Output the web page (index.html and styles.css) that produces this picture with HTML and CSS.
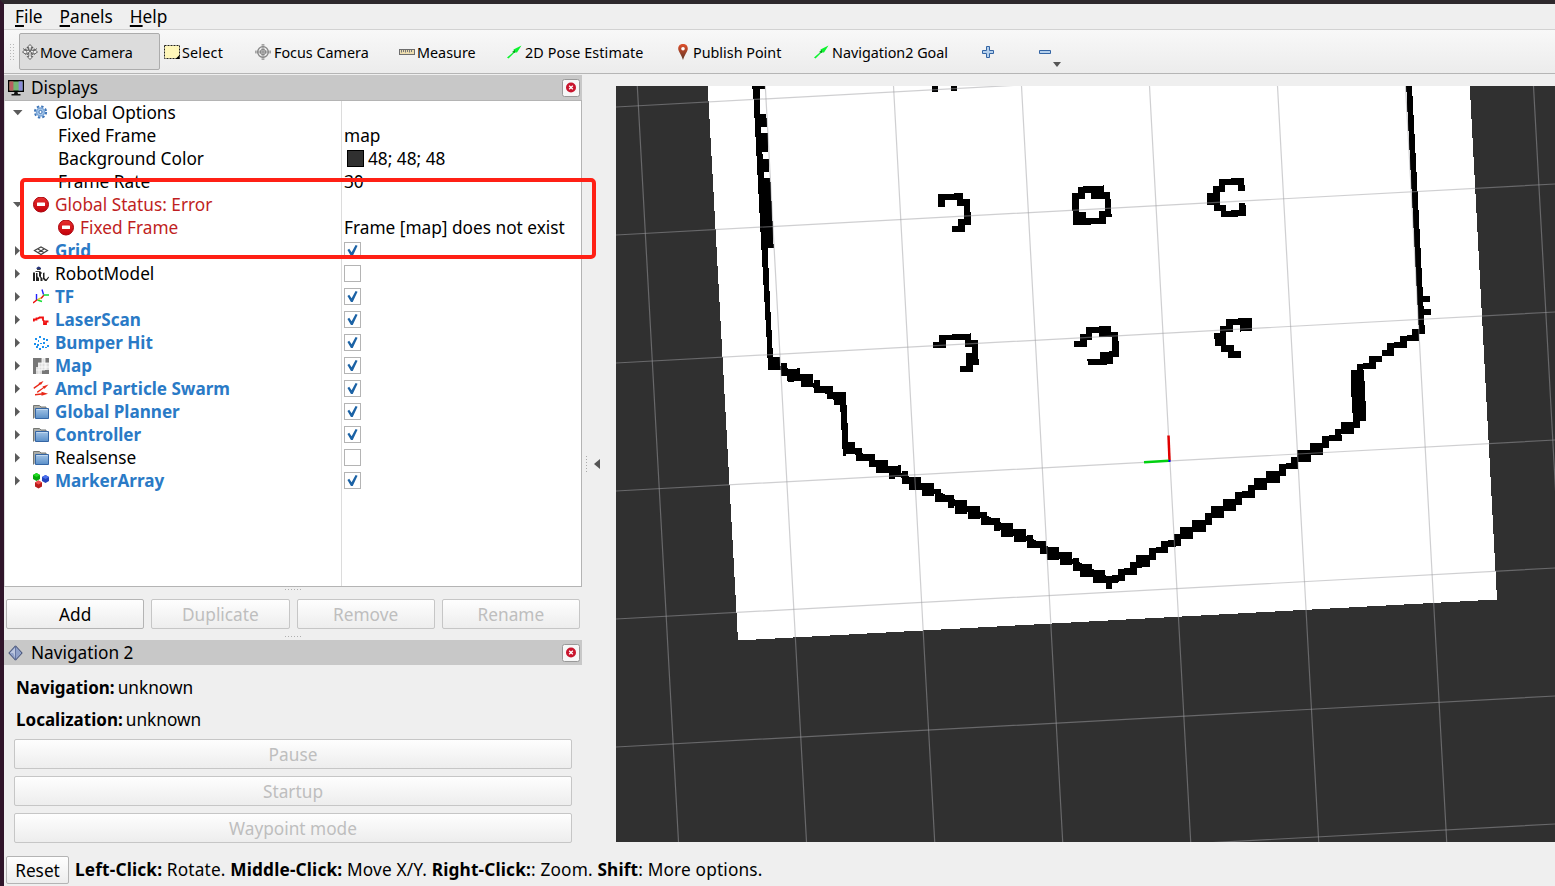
FILE: index.html
```
<!DOCTYPE html>
<html lang="en">
<head>
<meta charset="utf-8">
<title>RViz</title>
<link rel="stylesheet" href="styles.css">
</head>
<body>
<svg class="defs" width="0" height="0">
  <defs>
    <linearGradient id="pin" x1="0" y1="0" x2="0" y2="1"><stop offset="0" stop-color="#e0502c"/><stop offset="1" stop-color="#5c3423"/></linearGradient>
    <linearGradient id="fold" x1="0" y1="0" x2="0" y2="1"><stop offset="0" stop-color="#a3c4e6"/><stop offset="1" stop-color="#5a8fc8"/></linearGradient>
    <linearGradient id="stopfill" x1="0" y1="0" x2="0" y2="1"><stop offset="0" stop-color="#e83030"/><stop offset="1" stop-color="#c40009"/></linearGradient>
    <symbol id="i-arrow" viewBox="0 0 16 16"><path d="M1 13.500L8 7.500l-.5-2L15.500 1.500 11 8.500 8.500 8.500 2.500 14.500z" fill="#0cf32f"/><path d="M6 8l3-2v3z" fill="#0a9a1e"/></symbol>
    <symbol id="i-stop" viewBox="0 0 16 16"><circle cx="8" cy="7.500" r="7.500" fill="url(#stopfill)" stroke="#a8000a"/><rect x="4" y="5.500" width="8" height="3.500" rx=".5" fill="#fff"/></symbol>
    <symbol id="i-folder" viewBox="0 0 16 16"><path d="M.5 14.500v-13h6l1.500 1.500h5v3" fill="#aaaca8" stroke="#757773"/><path d="M2.500 4.500h13v10h-13z" fill="url(#fold)" stroke="#3465a4"/><path d="M3.500 5.500h11" stroke="#c2d8ee"/></symbol>
    <symbol id="i-close" viewBox="0 0 18 18"><rect x=".5" y=".5" width="17" height="17" rx="2" fill="#f7f7f7" stroke="#999"/><circle cx="9" cy="8.500" r="5" fill="#c9152d"/><path d="M7.200 6.700l3.600 3.600M10.800 6.700l-3.600 3.600" stroke="#fff" stroke-width="1.300"/></symbol>
    <symbol id="i-open" viewBox="0 0 10 10"><path d="M0 2h9.500L4.750 7.300z" fill="#5b5b5b"/></symbol>
    <symbol id="i-shut" viewBox="0 0 10 10"><path d="M2 0v9.500L7 4.700z" fill="#5b5b5b"/></symbol>
  </defs>
</svg>
<div class="window">
  <nav class="menubar"><span><u>F</u>ile</span><span><u>P</u>anels</span><span><u>H</u>elp</span></nav>
  <div class="toolbar">
    <i class="grip"></i>
    <button class="tool t-move active"><svg viewBox="0 0 16 16"><g fill="#eee" stroke="#555" stroke-width=".9"><path d="M8 .5l2.800 3H9.200v2.800H12V4.800L15.500 8l-3.500 2.500V9H9.200v3.500h1.600L8 15.500l-2.800-3h1.600V9H4v1.500L.5 8 4 4.800v1.500h2.800V3.500H5.200z"/><path d="M1 4.500l4 3M15 4.500l-4 3M5 3l6 8M11 3l-6 8"/></g></svg><span>Move Camera</span></button>
    <button class="tool t-select"><svg viewBox="0 0 16 16"><rect x=".5" y="1.500" width="15" height="13" fill="#fff7ba" stroke="#222" stroke-dasharray="2 1"/><path d="M15.500 11v4h-4z"/></svg><span>Select</span></button>
    <button class="tool t-focus"><svg viewBox="0 0 16 16"><g fill="none" stroke="#888"><circle cx="8" cy="8" r="5.300" stroke-width="1.300"/><circle cx="8" cy="8" r="2.700"/><path d="M6.800 0h2.400M6.800 16h2.400M0 6.800v2.400M16 6.800v2.400M7.200 0v16M8.800 0v16M0 7.200h16M0 8.800h16" stroke-width=".8"/></g></svg><span>Focus Camera</span></button>
    <button class="tool t-measure"><svg viewBox="0 0 16 16"><rect x=".5" y="5.500" width="15" height="5" fill="#ecdcae" stroke="#6d6d6d"/><path d="M2.500 6v2.500M4.500 6v2M6.500 6v2.500M8.500 6v2M10.500 6v2.500M12.500 6v2" stroke="#777"/></svg><span>Measure</span></button>
    <button class="tool t-pose"><svg><use href="#i-arrow"/></svg><span>2D Pose Estimate</span></button>
    <button class="tool t-point"><svg viewBox="0 0 16 16"><path d="M8 0C4.400 0 3.200 2.400 3.200 4.500c0 3 3.200 6 4.800 11.500 1.600-5.500 4.800-8.500 4.800-11.500C12.800 2.400 11.600 0 8 0z" fill="url(#pin)"/><circle cx="8" cy="4.700" r="1.800" fill="#fff"/></svg><span>Publish Point</span></button>
    <button class="tool t-goal"><svg><use href="#i-arrow"/></svg><span>Navigation2 Goal</span></button>
    <button class="tool t-plus"><svg viewBox="0 0 16 16"><path d="M6.500 2.500h3v4h4v3h-4v4h-3v-4h-4v-3h4z" fill="#b5d0ec" stroke="#3465a4"/></svg></button>
    <button class="tool t-minus"><svg viewBox="0 0 16 16"><path d="M2.500 6.500h11v3h-11z" fill="#b5d0ec" stroke="#3465a4"/></svg><i class="drop"></i></button>
  </div>
  <div class="main">
    <aside class="left">
      <header class="dock-title"><svg viewBox="0 0 16 16"><path d="M.7.7h14.600v10.600H.7z" fill="#73b573" stroke="#000" stroke-width="1.400"/><path d="M1.400 1.400h4v9.200h-4z" fill="#b95d60"/><path d="M10.600 1.400h4v9.200h-4z" fill="#8a8ad8"/><path d="M6.500 12h3l.5 2h2.500v1.500h-9V14H6z" fill="#111"/></svg><span>Displays</span><svg class="close"><use href="#i-close"/></svg></header>
      <section class="tree">
        <div class="row"><svg class="tw"><use href="#i-open"/></svg><svg class="ic" viewBox="0 0 16 16"><g fill="none" stroke="#3f76b8"><circle cx="7.500" cy="7" r="5.600" stroke-width="2" stroke-dasharray="2.400 2"/><circle cx="7.500" cy="7" r="4" fill="#a9c8ea" stroke="#7aa6d8" stroke-width="1.500"/><circle cx="7.500" cy="7" r="1.600" fill="#fff"/></g></svg><span class="name">Global Options</span></div>
        <div class="row child"><span class="name">Fixed Frame</span><span class="val">map</span></div>
        <div class="row child"><span class="name">Background Color</span><span class="val"><i class="swatch"></i>48; 48; 48</span></div>
        <div class="row child"><span class="name">Frame Rate</span><span class="val">30</span></div>
        <div class="row error"><svg class="tw"><use href="#i-open"/></svg><svg class="ic"><use href="#i-stop"/></svg><span class="name">Global Status: Error</span></div>
        <div class="row error sub"><svg class="ic"><use href="#i-stop"/></svg><span class="name">Fixed Frame</span><span class="val frame">Frame [map] does not exist</span></div>
        <div class="row on"><svg class="tw"><use href="#i-shut"/></svg><svg class="ic" viewBox="0 0 16 16"><path d="M1.500 7.500L8 4l6.500 3.500L8 11.500zM4.500 5.800l6.700 3.900M11.500 5.800L4.800 9.700" fill="none" stroke="#444" stroke-width="1.200"/></svg><span class="name">Grid</span><i class="check"></i></div>
        <div class="row"><svg class="tw"><use href="#i-shut"/></svg><svg class="ic" viewBox="0 0 16 16"><path d="M3.500 2q2-3 4.500 0v1H3.500z" fill="#29377b"/><path d="M4 3.500h3.500M2.500 5.500h5" stroke="#444"/><path d="M0 6.500h2V15H0zM3 7h1.500v3.500L6 12v3H3zM6 6h2.500v2H8v3l1.500 1v3H7.500v-3L6 10zM10 7l1.500-.5V12l1.500 1.500 2.500-3 .5 1-2.500 3.500H12l-2-2z" fill="#222"/></svg><span class="name">RobotModel</span><i class="check off"></i></div>
        <div class="row on"><svg class="tw"><use href="#i-shut"/></svg><svg class="ic" viewBox="0 0 16 16" fill="none" stroke-width="1.400"><path d="M3.500 5v6M9 .5l1.500 5" stroke="#22f"/><path d="M0 14l4.500-3.500M8 9.500l3-3.500" stroke="#e11"/><path d="M10.500 6H16M4.500 11l4.500 1.500" stroke="#1d3"/><path d="M5 10.500l3-1.500" stroke="#dc2"/></svg><span class="name">TF</span><i class="check"></i></div>
        <div class="row on"><svg class="tw"><use href="#i-shut"/></svg><svg class="ic" viewBox="0 0 16 16"><path d="M.8 9.500V7.500h2.700v-1.200h2L6.500 5.500H10V8l1 1v3h2V9.500h2.500" fill="none" stroke="#f00e0e" stroke-width="1.800"/></svg><span class="name">LaserScan</span><i class="check"></i></div>
        <div class="row on"><svg class="tw"><use href="#i-shut"/></svg><svg class="ic" viewBox="0 0 16 16"><path d="M6 1h2v2H6zM2 3h2v2H2zM10 3h2v2h-2zM5 5h1v2H5zM13 4h2v2h-2zM1 8h2v2H1zM4 9h2v2H4zM7 8h2v1H7zM10 7h2v2h-2zM14 10h2v2h-2zM3 11h2v2H3zM9 11h2v2H9zM6 13h2v2H6zM12 12h2v1h-2z" fill="#1d91ee"/></svg><span class="name">Bumper Hit</span><i class="check"></i></div>
        <div class="row on"><svg class="tw"><use href="#i-shut"/></svg><svg class="ic" viewBox="0 0 16 16"><path d="M0 0h16v16H0z" fill="#ddd"/><path d="M0 0h9v5H5v4H3v7H0zM12 0h4v5h-4zM9 12h7v4H9z" fill="#777"/><path d="M9 0h3v12H9zM5 5h11M5 9h11M3 12h6M6 5v11M13 5v7" fill="none" stroke="#fff" stroke-width=".8"/></svg><span class="name">Map</span><i class="check"></i></div>
        <div class="row on"><svg class="tw"><use href="#i-shut"/></svg><svg class="ic" viewBox="0 0 16 16"><path d="M.5 6.500L6 2.800 5.500 2 10.500 0 8 3.800 7.300 3.500 1 8zM4 10.500l6-4L9.500 5.500 15.500 3.500 11.500 7.800l-.8-.5L4.500 12zM2 13l6.500-.7v-1.500l6.500 2-6.500 2v-1L2 14.500z" fill="#e82818"/></svg><span class="name">Amcl Particle Swarm</span><i class="check"></i></div>
        <div class="row on"><svg class="tw"><use href="#i-shut"/></svg><svg class="ic"><use href="#i-folder"/></svg><span class="name">Global Planner</span><i class="check"></i></div>
        <div class="row on"><svg class="tw"><use href="#i-shut"/></svg><svg class="ic"><use href="#i-folder"/></svg><span class="name">Controller</span><i class="check"></i></div>
        <div class="row"><svg class="tw"><use href="#i-shut"/></svg><svg class="ic"><use href="#i-folder"/></svg><span class="name">Realsense</span><i class="check off"></i></div>
        <div class="row on"><svg class="tw"><use href="#i-shut"/></svg><svg class="ic" viewBox="0 0 16 16"><path d="M0 2l3.500-2L7 2v4L3.500 8 0 6z" fill="#07a80c"/><path d="M0 2l3.500-2L7 2 3.500 4z" fill="#22dc22"/><path d="M9 4l3.500-2L16 4v4l-3.500 2L9 8z" fill="#2343bd"/><path d="M9 4l3.500-2L16 4l-3.500 2z" fill="#4b70ee"/><path d="M2 9.500l3.500-2 3.500 2v4l-3.500 2-3.500-2z" fill="#b91d1d"/><path d="M2 9.500l3.500-2 3.500 2-3.500 2z" fill="#f05050"/></svg><span class="name">MarkerArray</span><i class="check"></i></div>
      </section>
      <i class="dots"></i>
      <div class="buttons"><button class="btn add">Add</button><button class="btn" disabled>Duplicate</button><button class="btn" disabled>Remove</button><button class="btn" disabled>Rename</button></div>
      <i class="dots low"></i>
      <header class="dock-title"><svg viewBox="0 0 16 16"><path d="M7.500.8l6.700 7.200-6.700 7.200L.8 8z" fill="#8fa0c8" stroke="#39466c"/><path d="M7.500 2.200L2.200 8h3l2.300 5.800z" fill="#bcc6de"/><path d="M7.500 2v12" stroke="#4b5c8c" stroke-width=".7"/></svg><span>Navigation 2</span><svg class="close"><use href="#i-close"/></svg></header>
      <section class="nav-panel">
        <p><b>Navigation:</b><span>unknown</span></p>
        <p class="loc"><b>Localization:</b><span>unknown</span></p>
        <button class="btn" disabled>Pause</button><button class="btn" disabled>Startup</button><button class="btn" disabled>Waypoint mode</button>
      </section>
    </aside>
    <div class="splitter"><i></i><b></b></div>
    <svg class="view" viewBox="616 86 939 756">
      <rect x="616" y="86" width="939" height="756" fill="#303030"/>
      <path d="M706.500 64L1468.600 64 1497 599.500 738 640.500z" fill="#fff" shape-rendering="crispEdges"/>
      <g shape-rendering="crispEdges">
        <path d="M1406.200 86h5.800L1425 334h-6z"/>
        <g transform="translate(616 84) scale(.33333)"><path d="M409 6H447V14H431L432 90H451L453 129H435V148H455L457 205H439L441 225H459L460 264H443L444 282H463L470 420 473 492H455L462 655 471 819H492V858H456L453 785 433 435 411 14H409zM948 6h18v17h-18zM1005 6h18v15h-18z"/></g>
        <g transform="translate(740 340) scale(.33333)"><path d="M120 80L165 107 300 176M330 328L1105 718" fill="none" stroke="#000" stroke-width="14"/><path d="M84 51H120V90H84zM123 69H141V108H123zM141 87H180V123H141zM171 84h9v9h-9zM144 120h18v6h-18zM180 102H219V141H183V123H180zM222 120H240V159H222zM240 138H279V159H240zM261 138H279V177H261zM279 156H318V195H282V180H279zM300 195H321V216H300zM303 195H321V270H303zM306 249H324V327H306zM309 307H345V342H318V347H309zM345 324H366V345H345zM348 324H366V363H348zM366 342H405V363H366zM387 342H405V381H387zM405 360H444V399H408V381H405zM444 378H483V411H447V399H444zM474 375h9v9h-9zM447 405h18v11h-18zM486 393H504V432H486zM483 398h9v12h-9zM504 411H543V450H507V432H504zM543 429H582V468H546V450H543zM585 447H603V486H585zM603 465H642V486H603zM624 465H642V503H624zM645 480H681V521H645zM642 486h6v12h-6zM681 498H720V537H684V516H681zM723 516H741V555H723zM741 534H780V555H741zM762 534H780V572H762zM780 550H819V590H783V570H780zM819 567H858V606H822V588H819zM861 585H879V624H861zM879 603H918V624H879zM900 603H918V642H900zM918 620H957V660H921V642H918zM957 637H996V676H960V657H957zM999 654H1017V693H999zM1017 672H1056V711H1020V693H1017zM1056 690H1095V729H1059V711H1056zM1095 708H1116V747H1098V729H1095zM1116 705H1137V726H1116zM1134 687H1155V723H1134zM1152 684H1176V705H1152zM1172 666H1191V702H1172zM1188 646H1206V684H1188z"/></g>
        <g transform="translate(1090 290) scale(.33333)"><path d="M48 858H66V896H48zM66 858H84V879H66zM84 837H105V873H84zM102 834H141V855H102zM121 816H141V852H121zM138 795H180V831H138zM177 774H198V810H177zM198 771H234V789H198zM213 753H234V789H213zM234 750H258V771H234zM252 732H272V768H252zM270 711H309V747H270zM306 690H347V726H306zM345 669H365V705H345zM363 648H402V684H363zM399 627H438V663H399zM436 606H456V645H436zM456 603H495V624H456zM474 585H495V621H474zM492 564H531V600H492zM528 543H570V579H528zM567 522H588V558H567zM588 519H624V537H588zM603 501H624V537H603zM621 480H662V516H621zM660 459H699V495H660zM696 438H717V474H696zM717 435H755V453H717zM735 417H753V453H735zM753 396H792V432H753zM789 393H810V414H789zM783 240H822L828 360V393H789L783 294zM801 222H819V240H801zM819 219H858V237H819zM837 198H858V237H837zM858 198H876V216H858zM876 180H912V198H876zM892 159H912V195H892zM912 156H951V174H912zM930 138H951V174H930zM951 135H987V153H951zM966 117H987V153H966zM987 114H1005V133H987zM1000 18h20v18h-20zM1002 57h21v19h-21z"/></g>
        <g transform="translate(920 170) scale(.33333)"><path d="M54 72H102V69H129V87H150V126H153V165H135V186H96V168H114V147H132V108H111V90H75V110H54zM459 165V123H456V69H474V51H489V48H550V45H552V66H571V87H574V132H576V141H558V162H513V165zM477 87V126H498V144H537V123H555V87H513V69H495V87zM897 27H933V24H972V45H975V63H954V45H915V66H900V105H918V123H933V120H957V99H975V105H978V138H954V141H903V123H882V105H861V72L858 69H879V51L876 48H897zM57 495H96V492H150L153 489V510H174V567H177V585H159V606H120V588H138V549L135 552V549H156V530H135V510H78V533H39V516H57zM498 471H537V468H573V486H594V513H597V561H579V582H561V585H506V587L501 567H540V546H558L575 543V501H537V489H516V509H501V530H462V512H480V492H498zM918 447H954V444H996V483H969L960 486V465H939V486H918V525H942V543H963V563H924V546H903V527H885V507H882V489H900V468H918z"/></g>
      </g>
      <g fill="none" stroke="#a0a0a4" stroke-opacity=".5" stroke-width="1.200">
        <path d="M637.300 86l41.200 756M765.300 86l41.200 756M893.500 86l41.200 756M1021.500 86l41.200 756M1149.500 86l41.200 756M1277.500 86l41.200 756M1405.500 86l41.200 756M1533.500 86l41.200 756"/>
        <path d="M616 107l939-51M616 235l939-51M616 363l939-51M616 491l939-51M616 619l939-51M616 747l939-51M616 875l939-51"/>
      </g>
      <path d="M1168.500 435.500l1 25" stroke="#e00000" stroke-width="2.500"/><path d="M1144 462.300l25-1.500" stroke="#00d010" stroke-width="2.500"/><path d="M1168.500 460h2v2h-2z" fill="#00f"/>
    </svg>
    <div class="marker"></div>
  </div>
  <footer class="status"><button class="btn">Reset</button><p><b>Left-Click:</b> Rotate. <b>Middle-Click:</b> Move X/Y. <b>Right-Click:</b>: Zoom. <b>Shift</b>: More options.</p></footer>
</div>
</body>
</html>
```
FILE: styles.css
```
* { box-sizing: border-box; }
body { margin: 0; width: 1555px; height: 886px; overflow: hidden; font: 17.250px/23px "Noto Sans", sans-serif; color: #000; background: #efefef; }
button { font: inherit; color: inherit; padding: 0; margin: 0; border: 0; background: none; }
p { margin: 0; }
i { font-style: normal; }
.defs { position: absolute; }
.window { height: 886px; border-top: 4px solid #2e292d; border-left: 4px solid #30152a; display: flex; flex-direction: column; position: relative; }

.menubar { height: 26px; border-bottom: 1px solid #d2d2d2; display: flex; gap: 17px; padding: 1px 0 0 11px; line-height: 23px; }
.menubar u { text-decoration-thickness: 2px; text-underline-offset: 2px; }
.toolbar { height: 44px; border-bottom: 1px solid #b5b5b5; background: linear-gradient(#f8f8f8, #ececec); display: flex; align-items: center; font-size: 14.350px; }
.grip { width: 6px; height: 18px; margin: 0 4px 0 5px; background: radial-gradient(circle, #b8b8b8 .7px, transparent .9px) 0 0 / 3px 3px; }
.tool { height: 37px; display: flex; align-items: center; flex: none; white-space: nowrap; position: relative; padding-left: 4px; }
.tool span { padding-top: 2px; }
.tool svg { width: 16px; height: 16px; margin-right: 2px; flex: none; }
.active { background: #dcdcdc; border: 1px solid #acacac; border-radius: 2px; padding-left: 2px; }
.t-move { width: 141px; }
.t-select { width: 91px; letter-spacing: .2px; }
.t-focus { width: 144px; }
.t-focus svg { margin-right: 3px; }
.t-measure { width: 108px; }
.t-pose { width: 170px; padding-left: 3px; letter-spacing: .1px; }
.t-pose svg, .t-goal svg { margin-right: 3px; }
.t-point { width: 137px; padding-left: 2px; }
.t-goal { width: 166px; padding-left: 3px; }
.t-plus { width: 57px; }
.t-minus { width: 32px; }
.drop { position: absolute; left: 20px; top: 29px; border: 4.500px solid transparent; border-top: 5px solid #555; border-bottom: 0; }

.main { height: 777px; display: flex; padding-top: 1px; }
.left { width: 578px; display: flex; flex-direction: column; }
.dock-title { height: 25px; background: #c8c8c8; display: flex; align-items: center; padding: 0 2px 0 4px; flex: none; }
.dock-title svg { width: 16px; height: 16px; margin-right: 7px; }
.dock-title .close { width: 18px; height: 18px; margin: 0 0 0 auto; }
.tree { height: 487px; background: linear-gradient(#dcdcdc, #dcdcdc) 336px 0 / 1px 100% no-repeat #fff; border: 1px solid #b4b4b4; border-left-color: #ddd; flex: none; }
.row { height: 23px; display: grid; grid-template: 23px / 8px 20px 22px 289px 1fr; align-items: center; white-space: nowrap; }
.tw { width: 10px; height: 10px; grid-column: 2; }
.ic { width: 16px; height: 16px; grid-column: 3; }
.name { grid-column: 4; }
.val, .check { grid-column: 5; }
.child .name { padding-left: 3px; }
.sub .ic { margin-left: 25px; }
.sub .name { padding-left: 25px; }
.error { color: #bf1e22; }
.error .val { color: #000; }
.on .name { color: #2a7ac6; font-weight: 700; font-size: 17.100px; }
.val { display: flex; align-items: center; }
.swatch { width: 17px; height: 17px; background: #303030; border: 1px solid #000; margin: 0 4px 0 3px; }
.check { width: 17px; height: 17px; border: 1px solid #b4b4b4; position: relative; }
.check::after { content: ""; position: absolute; inset: 2px; background: #1b62a5; clip-path: polygon(4% 45%, 20% 34%, 42% 66%, 78% 0, 96% 6%, 52% 100%, 36% 100%); }
.off::after { display: none; }
.dots { width: 16px; height: 1px; align-self: center; margin: 2px 0 9px; background: repeating-linear-gradient(90deg, #b0b0b0 0 1px, transparent 1px 3px); flex: none; }
.dots.low { margin: 7px 0 3px; }
.buttons { display: flex; gap: 7px; padding: 0 2px; }
.btn { flex: 1; height: 30px; border: 1px solid #b4b4b4; border-radius: 2px; background: linear-gradient(#fefefe, #ededed); }
.btn:disabled { color: #bebebe; border-color: #c6c6c6; }
.nav-panel { padding: 7px 10px 0; display: flex; flex-direction: column; }
.nav-panel p { height: 32px; line-height: 31px; padding-left: 2px; display: flex; gap: 3px; }
.nav-panel b { font-size: 17px; }
.nav-panel .btn { flex: none; margin: 3px 0 4px; }
.splitter { width: 34px; display: flex; align-items: center; flex: none; }
.splitter i { width: 1px; height: 17px; margin: 2px 7px 0 4px; background: repeating-linear-gradient(#aaa 0 1px, transparent 1px 3px); }
.splitter b { border: 5px solid transparent; border-right: 6px solid #555; border-left: 0; margin-top: 2px; }
.view { width: 939px; height: 756px; margin-top: 11px; flex: none; }
.marker { position: absolute; left: 16px; top: 174px; width: 576px; height: 81px; border: 4px solid #ff2015; border-radius: 5px; }
.status { display: flex; align-items: center; padding: 5px 0 0 2px; gap: 6px; white-space: nowrap; }
.status p { letter-spacing: .160px; padding-bottom: 2px; }
.status .btn { flex: none; width: 63px; height: 28px; }
```
